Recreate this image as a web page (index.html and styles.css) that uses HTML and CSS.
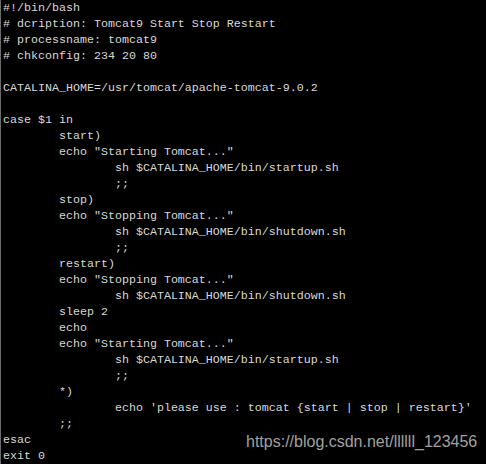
FILE: index.html
```html
<!DOCTYPE html>
<html>
<head>
<meta charset="utf-8">
<link rel="stylesheet" href="styles.css">
</head>
<body>
<div class="term">
<pre class="code">#!/bin/bash
# dcription: Tomcat9 Start Stop Restart
# processname: tomcat9
# chkconfig: 234 20 80

CATALINA_HOME=/usr/tomcat/apache-tomcat-9.0.2

case $1 in
        start)
        echo "Starting Tomcat..."
                sh $CATALINA_HOME/bin/startup.sh
                ;;
        stop)
        echo "Stopping Tomcat..."
                sh $CATALINA_HOME/bin/shutdown.sh
                ;;
        restart)
        echo "Stopping Tomcat..."
                sh $CATALINA_HOME/bin/shutdown.sh
        sleep 2
        echo
        echo "Starting Tomcat..."
                sh $CATALINA_HOME/bin/startup.sh
                ;;
        *)
                echo 'please use : tomcat {start | stop | restart}'
        ;;
esac
exit 0</pre>
<div class="watermark">https://blog.csdn.net/llllll_123456</div>
</div>
</body>
</html>
```

FILE: styles.css
```css
html, body {
  margin: 0;
  padding: 0;
  background: #000;
}
.term {
  position: relative;
  width: 486px;
  height: 464px;
  background: #000;
  border-left: 1px solid #6a6a6a;
  box-sizing: border-box;
  overflow: hidden;
}
.code {
  margin: 0;
  padding: 0 0 0 2px;
  font-family: "Liberation Mono", "Courier New", monospace;
  font-size: 11.67px;
  line-height: 16px;
  color: #d8d8d8;
  white-space: pre;
}
.watermark {
  position: absolute;
  left: 245px;
  top: 432px;
  font-family: "Liberation Sans", Arial, sans-serif;
  font-size: 16px;
  line-height: 20px;
  color: #a0a0a0;
}
```
